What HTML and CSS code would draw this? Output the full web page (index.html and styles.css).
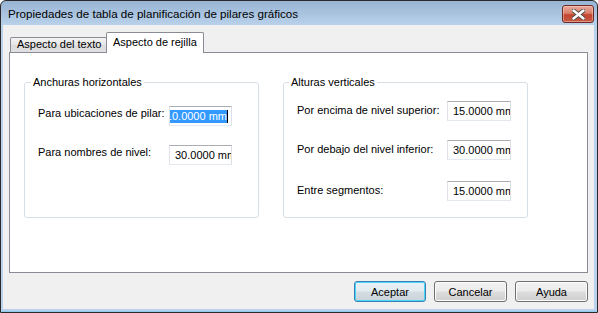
FILE: index.html
```html
<!DOCTYPE html>
<html lang="es">
<head>
<meta charset="utf-8">
<title>Propiedades de tabla de planificación de pilares gráficos</title>
<link rel="stylesheet" href="styles.css">
</head>
<body>
<div class="window">
  <div class="titlebar">
    <span class="title">Propiedades de tabla de planificación de pilares gráficos</span>
    <button class="close" aria-label="Cerrar">
      <svg width="13" height="11" viewBox="0 0 13 11">
        <path d="M1.5 1.5 L11.5 9.5 M11.5 1.5 L1.5 9.5" stroke="#4b4b4b" stroke-width="4.2" stroke-linecap="round"/>
        <path d="M1.5 1.5 L11.5 9.5 M11.5 1.5 L1.5 9.5" stroke="#ffffff" stroke-width="2.4" stroke-linecap="round"/>
      </svg>
    </button>
  </div>
  <div class="client">
    <div class="tabs">
      <div class="tab">Aspecto del texto</div>
      <div class="tab active">Aspecto de rejilla</div>
    </div>
    <div class="panel">
      <div class="group group-left">
        <span class="legend">Anchuras horizontales</span>
        <div class="row row-first">
          <span class="label">Para ubicaciones de pilar:</span>
          <div class="field field-focus"><span class="sel">10.0000 mm</span><span class="caret"></span></div>
        </div>
        <div class="row row-gap19">
          <span class="label">Para nombres de nivel:</span>
          <div class="field"><span class="val">30.0000 mm</span></div>
        </div>
      </div>
      <div class="group group-right">
        <span class="legend">Alturas verticales</span>
        <div class="row row-first">
          <span class="label">Por encima de nivel superior:</span>
          <div class="field"><span class="val">15.0000 mm</span></div>
        </div>
        <div class="row row-gap19">
          <span class="label">Por debajo del nivel inferior:</span>
          <div class="field"><span class="val">30.0000 mm</span></div>
        </div>
        <div class="row row-gap21">
          <span class="label">Entre segmentos:</span>
          <div class="field"><span class="val">15.0000 mm</span></div>
        </div>
      </div>
    </div>
    <div class="buttons">
      <button class="btn btn-default">Aceptar</button>
      <button class="btn">Cancelar</button>
      <button class="btn">Ayuda</button>
    </div>
  </div>
</div>
</body>
</html>
```
FILE: styles.css
```css
html, body {
  margin: 0;
  padding: 0;
  background: #ffffff;
}

body {
  font-family: "Liberation Sans", Arial, sans-serif;
  font-size: 11px;
  color: #000000;
}

.window {
  width: 598px;
  height: 313px;
  box-sizing: border-box;
  border: 1px solid #2a2a2a;
  border-radius: 6px 6px 0 0;
  background: linear-gradient(#98b4d4 0px, #b9d1ea 24px, #b9d1ea 100%);
  padding: 0 3px 3px 2px;
  display: flex;
  flex-direction: column;
  overflow: hidden;
  box-shadow: inset 0 -1px 0 #8fcbee;
}

.titlebar {
  height: 24px;
  display: flex;
  align-items: flex-start;
  justify-content: space-between;
  padding-left: 5px;
}

.title {
  font-family: "Liberation Sans", Arial, sans-serif;
  font-size: 11.6px;
  line-height: 14px;
  margin-top: 6px;
  color: #000000;
  white-space: nowrap;
}

.close {
  margin: 4px 0 0 0;
  width: 32px;
  height: 18px;
  padding: 0;
  border: 1px solid #6c2a22;
  border-radius: 3px;
  background: linear-gradient(#e9a99b 0%, #d9806c 45%, #c4452f 55%, #c75a45 100%);
  box-shadow: inset 0 0 0 1px rgba(255, 220, 210, 0.45);
  display: flex;
  align-items: center;
  justify-content: center;
}

.client {
  flex: 1;
  background: #f0f0f0;
  padding: 7px 6px 7px 6px;
  display: flex;
  flex-direction: column;
}

.tabs {
  height: 20px;
  display: flex;
  align-items: flex-end;
  padding-left: 1px;
  position: relative;
  z-index: 1;
}

.tab {
  box-sizing: border-box;
  height: 15px;
  width: 97px;
  border: 1px solid #898c95;
  border-bottom: none;
  border-radius: 2px 2px 0 0;
  background: linear-gradient(#f3f3f3, #e6e6e6 50%, #dcdcdc 51%, #e0e0e0);
  padding-left: 6px;
  line-height: 13px;
  white-space: nowrap;
}

.tab.active {
  height: 21px;
  width: 98px;
  margin-left: -1px;
  margin-bottom: -1px;
  background: #ffffff;
  padding-top: 3px;
}

.panel {
  flex: 1;
  border: 1px solid #898c95;
  background: #ffffff;
  padding: 29px 0 0 14px;
  display: flex;
  align-items: flex-start;
  gap: 24px;
}

.group {
  position: relative;
  box-sizing: border-box;
  height: 136px;
  border: 1px solid #d5dfe5;
  border-radius: 3px;
  padding-left: 13px;
}

.group-left {
  width: 235px;
}

.group-right {
  width: 245px;
}

.legend {
  position: absolute;
  top: -8px;
  left: 6px;
  padding: 0 2px;
  background: #ffffff;
  line-height: 14px;
  white-space: nowrap;
}

.group-right .legend {
  left: 5px;
}

.row {
  display: flex;
  align-items: flex-start;
}

.group-left .row-first {
  margin-top: 23px;
}

.group-right .row-first {
  margin-top: 18px;
}

.row-gap19 {
  margin-top: 19px;
}

.row-gap21 {
  margin-top: 21px;
}

.label {
  line-height: 14px;
  white-space: nowrap;
}

.group-left .label {
  width: 131px;
}

.group-right .label {
  width: 150px;
  margin-top: 2px;
}

.field {
  box-sizing: border-box;
  width: 63px;
  height: 20px;
  border: 1px solid;
  border-color: #abadb3 #dbdfe6 #e3e9ef #e2e3ea;
  background: #ffffff;
  overflow: hidden;
  white-space: nowrap;
  display: flex;
  align-items: center;
  padding: 0 1px 0 5px;
}

.group-right .field {
  width: 64px;
}

.val {
  line-height: 14px;
}

.field-focus {
  justify-content: flex-end;
  padding: 0 3px 0 2px;
}

.sel {
  background: #3399ff;
  color: #ffffff;
  line-height: 13px;
  flex-shrink: 0;
}

.caret {
  width: 1px;
  height: 13px;
  background: #000000;
  flex-shrink: 0;
}

.buttons {
  height: 21px;
  margin-top: 8px;
  display: flex;
  justify-content: flex-end;
  gap: 8px;
  padding-right: 0;
}

.btn {
  box-sizing: border-box;
  width: 73px;
  height: 21px;
  margin: 0;
  padding: 0;
  border: 1px solid #707070;
  border-radius: 3px;
  background: linear-gradient(#f2f2f2 0%, #ebebeb 48%, #dddddd 52%, #cfcfcf 100%);
  box-shadow: inset 0 0 0 1px #fcfcfc;
  font-family: "Liberation Sans", Arial, sans-serif;
  font-size: 11px;
  color: #000000;
}

.btn-default {
  width: 72px;
  border-color: #3c7fb1;
  box-shadow: inset 0 0 0 1px #48d7f8;
  background: linear-gradient(#eaf2f7 0%, #e2ebf0 48%, #d3dde3 52%, #c9d3d9 100%);
}
```
